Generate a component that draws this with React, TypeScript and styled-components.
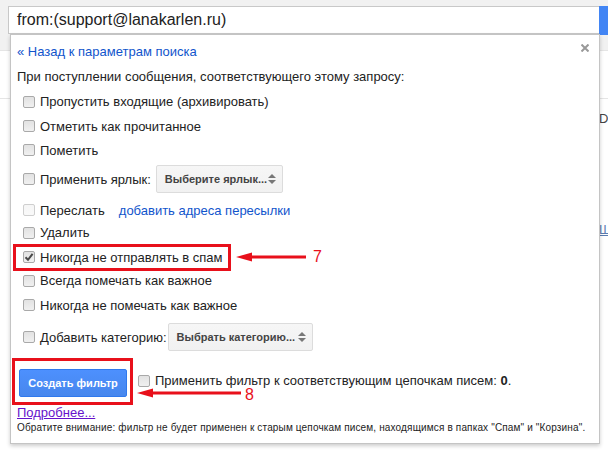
import React from "react";
import styled, { createGlobalStyle } from "styled-components";

const GlobalStyle = createGlobalStyle`
  html, body { margin: 0; padding: 0; background: #fff; }
  body { font-family: "Liberation Sans", Arial, sans-serif; color: #222; }
  * { box-sizing: border-box; }
`;

const Page = styled.div`
  position: relative;
  width: 608px;
  height: 451px;
  overflow: hidden;
  background: #fff;
`;

const Header = styled.div`
  height: 51px;
  background: #f1f1f1;
  border-bottom: 1px solid #e5e5e5;
  padding: 6px 0 0 8px;
  display: flex;
  align-items: flex-start;
`;

const SearchBox = styled.div`
  width: 591px;
  flex-shrink: 0;
  height: 28px;
  background: #fff;
  border: 1px solid #c8c8c8;
  border-right: none;
  padding-left: 8px;
  display: flex;
  align-items: center;
  font-size: 16px;
  color: #222;
  white-space: nowrap;
`;

const SearchButton = styled.div`
  width: 40px;
  height: 29px;
  background: #4285f4;
  flex-shrink: 0;
`;

const Toolbar = styled.div`
  height: 48px;
  border-bottom: 1px solid #e5e5e5;
`;

const Behind = styled.div`
  display: flex;
  flex-direction: column;
  padding-left: 599px;
  font-size: 13px;
  white-space: nowrap;
`;

const BehindText = styled.div<{ $mt: number; $link?: boolean }>`
  margin-top: ${(p) => p.$mt}px;
  line-height: 16px;
  color: ${(p) => (p.$link ? "#5a7bb0" : "#444")};
  text-decoration: ${(p) => (p.$link ? "underline" : "none")};
`;

const Panel = styled.div`
  position: absolute;
  left: 10px;
  top: 34px;
  width: 590px;
  background: #fff;
  border: 1px solid #c4c4c4;
  box-shadow: 0 2px 4px rgba(0, 0, 0, 0.2);
  padding: 7px 6px 8px 6px;
  display: flex;
  flex-direction: column;
  font-size: 13px;
`;

const BackRow = styled.div`
  height: 18px;
  display: flex;
  align-items: center;
  justify-content: space-between;
`;

const Link = styled.a`
  color: #15c;
  text-decoration: none;
  cursor: pointer;
`;

const CloseIcon = styled.svg`
  margin-right: 4px;
  margin-top: -6px;
`;

const Intro = styled.div`
  margin-top: 8px;
  height: 18px;
  line-height: 18px;
`;

const Row = styled.div<{ $h: number; $mt?: number }>`
  height: ${(p) => p.$h}px;
  margin-top: ${(p) => p.$mt ?? 0}px;
  display: flex;
  align-items: center;
  padding-left: 6px;
  white-space: nowrap;
`;

const Label = styled.span`
  margin-left: 5px;
  color: #222;
`;

const Box = styled.span<{ $disabled?: boolean }>`
  width: 12px;
  height: 12px;
  flex-shrink: 0;
  border-radius: 2px;
  border: 1px solid ${(p) => (p.$disabled ? "#cfcfcf" : "#a9a9a9")};
  background: ${(p) =>
    p.$disabled
      ? "linear-gradient(#f6f6f6, #f9f9f9)"
      : "linear-gradient(#e2e2e2, #f0f0f0)"};
  display: flex;
  align-items: center;
  justify-content: center;
`;

const Checkbox = ({ checked, disabled }: { checked?: boolean; disabled?: boolean }) => (
  <Box $disabled={disabled}>
    {checked && (
      <svg width="10" height="10" viewBox="0 0 10 10">
        <path d="M1.5 5.2 L4 7.8 L8.6 1.8" fill="none" stroke="#4a4a4a" strokeWidth="2" />
      </svg>
    )}
  </Box>
);

const SelectBox = styled.div<{ $w: number; $ml: number }>`
  width: ${(p) => p.$w}px;
  height: 28px;
  margin-left: ${(p) => p.$ml}px;
  padding: 0 6px 0 8px;
  border: 1px solid #dcdcdc;
  border-radius: 2px;
  background: linear-gradient(#f6f6f6, #f1f1f1);
  display: flex;
  align-items: center;
  justify-content: space-between;
  font-size: 11px;
  font-weight: bold;
  color: #444;
`;

const Select = ({ text, width, ml }: { text: string; width: number; ml: number }) => (
  <SelectBox $w={width} $ml={ml}>
    <span>{text}</span>
    <svg width="8" height="12" viewBox="0 0 8 12">
      <path d="M0 5 L4 1 L8 5 Z" fill="#777" />
      <path d="M0 7 L4 11 L8 7 Z" fill="#777" />
    </svg>
  </SelectBox>
);

const ForwardLink = styled(Link)`
  margin-left: 14px;
`;

const ButtonRow = styled.div`
  margin-top: 18px;
  height: 28px;
  display: flex;
  align-items: center;
  white-space: nowrap;
`;

const CreateButton = styled.button`
  width: 108px;
  height: 28px;
  margin-left: 2px;
  border: 1px solid #3079ed;
  border-radius: 2px;
  background: linear-gradient(#4d90fe, #4787ed);
  color: #fff;
  font-family: "Liberation Sans", Arial, sans-serif;
  font-size: 11px;
  font-weight: bold;
  padding: 0;
`;

const ApplyLabel = styled.label`
  margin-left: 11px;
  margin-top: -5px;
  display: flex;
  align-items: center;
`;

const MoreLink = styled.a`
  margin-top: 8px;
  height: 16px;
  line-height: 16px;
  color: #61c;
  text-decoration: underline;
  align-self: flex-start;
`;

const Note = styled.div`
  height: 14px;
  line-height: 14px;
  font-size: 10px;
  letter-spacing: 0.15px;
  color: #222;
  white-space: nowrap;
`;

const RedFrame = styled.div<{ $l: number; $t: number; $w: number; $h: number }>`
  position: absolute;
  left: ${(p) => p.$l}px;
  top: ${(p) => p.$t}px;
  width: ${(p) => p.$w}px;
  height: ${(p) => p.$h}px;
  border: 3px solid #e8101b;
  pointer-events: none;
`;

const ArrowSvg = styled.svg<{ $l: number; $t: number }>`
  position: absolute;
  left: ${(p) => p.$l}px;
  top: ${(p) => p.$t}px;
`;

const StepNum = styled.div<{ $l: number; $t: number }>`
  position: absolute;
  left: ${(p) => p.$l}px;
  top: ${(p) => p.$t}px;
  font-size: 16px;
  line-height: 18px;
  color: #e8101b;
`;

const Arrow = ({ l, t, w }: { l: number; t: number; w: number }) => (
  <ArrowSvg $l={l} $t={t} width={w} height="12" viewBox={`0 0 ${w} 12`}>
    <path d={`M0 6 L16 1.5 L16 10.5 Z`} fill="#e8101b" />
    <rect x="14" y="4.5" width={w - 14} height="3" fill="#e8101b" />
  </ArrowSvg>
);

export default function App() {
  return (
    <>
      <GlobalStyle />
      <Page>
        <Header>
          <SearchBox>from:(support@lanakarlen.ru)</SearchBox>
          <SearchButton />
        </Header>
        <Toolbar />
        <Behind>
          <BehindText $mt={12}>Dow</BehindText>
          <BehindText $mt={95} $link>Шаблоны</BehindText>
        </Behind>

        <Panel>
          <BackRow>
            <Link>« Назад к параметрам поиска</Link>
            <CloseIcon width="8" height="8" viewBox="0 0 8 8">
              <path d="M0.5 0.5 L7.5 7.5 M7.5 0.5 L0.5 7.5" stroke="#999" strokeWidth="2" />
            </CloseIcon>
          </BackRow>
          <Intro>При поступлении сообщения, соответствующего этому запросу:</Intro>

          <Row $h={25} $mt={3}>
            <Checkbox />
            <Label>Пропустить входящие (архивировать)</Label>
          </Row>
          <Row $h={24}>
            <Checkbox />
            <Label>Отметить как прочитанное</Label>
          </Row>
          <Row $h={24}>
            <Checkbox />
            <Label>Пометить</Label>
          </Row>
          <Row $h={28} $mt={3}>
            <Checkbox />
            <Label>Применить ярлык:</Label>
            <Select text="Выберите ярлык..." width={127} ml={5} />
          </Row>
          <Row $h={24} $mt={5}>
            <Checkbox disabled />
            <Label>Переслать</Label>
            <ForwardLink>добавить адреса пересылки</ForwardLink>
          </Row>
          <Row $h={21}>
            <Checkbox />
            <Label>Удалить</Label>
          </Row>
          <Row $h={26} $mt={1}>
            <Checkbox checked />
            <Label>Никогда не отправлять в спам</Label>
          </Row>
          <Row $h={21}>
            <Checkbox />
            <Label>Всегда помечать как важное</Label>
          </Row>
          <Row $h={26} $mt={1}>
            <Checkbox />
            <Label>Никогда не помечать как важное</Label>
          </Row>
          <Row $h={28} $mt={5}>
            <Checkbox />
            <Label>Добавить категорию:</Label>
            <Select text="Выбрать категорию..." width={145} ml={1} />
          </Row>

          <ButtonRow>
            <CreateButton>Создать фильтр</CreateButton>
            <ApplyLabel>
              <Checkbox />
              <Label>
                Применить фильтр к соответствующим цепочкам писем: <b>0</b>.
              </Label>
            </ApplyLabel>
          </ButtonRow>

          <MoreLink>Подробнее...</MoreLink>
          <Note>
            Обратите внимание: фильтр не будет применен к старым цепочкам писем, находящимся в папках "Спам" и "Корзина".
          </Note>

          <RedFrame $l={2} $t={209} $w={218} $h={27} />
          <Arrow l={225} t={216} w={70} />
          <StepNum $l={302} $t={213}>7</StepNum>

          <RedFrame $l={1} $t={323} $w={121} $h={47} />
          <Arrow l={126} t={352} w={104} />
          <StepNum $l={234} $t={351}>8</StepNum>
        </Panel>
      </Page>
    </>
  );
}
